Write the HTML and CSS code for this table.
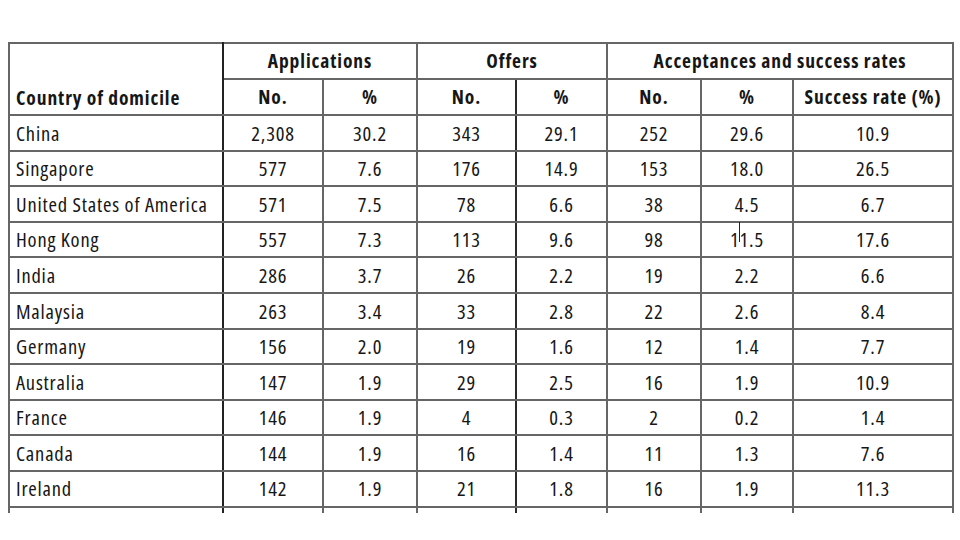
FILE: index.html
```html
<!DOCTYPE html>
<html>
<head>
<meta charset="utf-8">
<link rel="stylesheet" href="styles.css">
</head>
<body>
<div class="page">
<table class="data">
  <colgroup>
    <col class="c-country"><col class="c1"><col class="c2"><col class="c3"><col class="c4"><col class="c5"><col class="c6"><col class="c7">
  </colgroup>
  <thead>
    <tr class="h1">
      <th class="country-h" rowspan="2">Country of domicile</th>
      <th colspan="2">Applications</th>
      <th colspan="2">Offers</th>
      <th colspan="3">Acceptances and success rates</th>
    </tr>
    <tr class="h2">
      <th>No.</th><th>%</th><th class="dark-r">No.</th><th>%</th><th>No.</th><th>%</th><th>Success rate (%)</th>
    </tr>
  </thead>
  <tbody>
    <tr><td>China</td><td>2,308</td><td>30.2</td><td class="dark-r">343</td><td>29.1</td><td>252</td><td>29.6</td><td>10.9</td></tr>
    <tr><td>Singapore</td><td>577</td><td>7.6</td><td class="dark-r">176</td><td>14.9</td><td>153</td><td>18.0</td><td>26.5</td></tr>
    <tr><td>United States of America</td><td>571</td><td>7.5</td><td class="dark-r">78</td><td>6.6</td><td>38</td><td>4.5</td><td>6.7</td></tr>
    <tr><td>Hong Kong</td><td>557</td><td>7.3</td><td class="dark-r">113</td><td>9.6</td><td>98</td><td>1<span class="glitch">1</span>.5</td><td>17.6</td></tr>
    <tr><td>India</td><td>286</td><td>3.7</td><td class="dark-r">26</td><td>2.2</td><td>19</td><td>2.2</td><td>6.6</td></tr>
    <tr><td>Malaysia</td><td>263</td><td>3.4</td><td class="dark-r">33</td><td>2.8</td><td>22</td><td>2.6</td><td>8.4</td></tr>
    <tr><td>Germany</td><td>156</td><td>2.0</td><td class="dark-r">19</td><td>1.6</td><td>12</td><td>1.4</td><td>7.7</td></tr>
    <tr><td>Australia</td><td>147</td><td>1.9</td><td class="dark-r">29</td><td>2.5</td><td>16</td><td>1.9</td><td>10.9</td></tr>
    <tr><td>France</td><td>146</td><td>1.9</td><td class="dark-r">4</td><td>0.3</td><td>2</td><td>0.2</td><td>1.4</td></tr>
    <tr><td>Canada</td><td>144</td><td>1.9</td><td class="dark-r">16</td><td>1.4</td><td>11</td><td>1.3</td><td>7.6</td></tr>
    <tr><td>Ireland</td><td>142</td><td>1.9</td><td class="dark-r">21</td><td>1.8</td><td>16</td><td>1.9</td><td>11.3</td></tr>
    <tr class="cut"><td></td><td></td><td></td><td class="dark-r"></td><td></td><td></td><td></td><td></td></tr>
  </tbody>
</table>
</div>
</body>
</html>
```

FILE: styles.css
```css
html, body {
  margin: 0;
  padding: 0;
  background: #fff;
}
.page {
  width: 960px;
  height: 540px;
  overflow: hidden;
  padding: 42px 0 0 8px;
  box-sizing: border-box;
}
.data {
  border-collapse: collapse;
  table-layout: fixed;
  width: 944px;
  font-family: "Open Sans", "Noto Sans", sans-serif;
  font-stretch: 75%;
  font-size: 20.5px;
  letter-spacing: 0.8px;
  color: #161616;
}
.c-country { width: 214px; }
.c1 { width: 100px; }
.c2 { width: 94px; }
.c3 { width: 99px; }
.c4 { width: 91px; }
.c5 { width: 94px; }
.c6 { width: 92px; }
.c7 { width: 160px; }

.data th, .data td {
  border: 2px solid #666;
  padding: 0;
  text-align: center;
  line-height: 1;
  white-space: nowrap;
}
.data th {
  font-weight: 700;
  font-size: 19.5px;
  letter-spacing: 0.9px;
}
.data td:first-child {
  text-align: left;
  padding-left: 6px;
  border-right-color: #222;
}
.data th.country-h {
  text-align: left;
  padding-left: 6px;
  vertical-align: bottom;
  padding-bottom: 7px;
  border-right-color: #222;
}
.data .dark-r { border-right-color: #2a2a2a; }
.h1 { height: 36px; }
.h2 { height: 36px; }
.data tbody tr { height: 35.6px; }
.data tbody tr.cut { height: 6px; }
.data tbody tr.cut td { border-bottom: none; }
.glitch {
  position: relative;
}
.glitch::before {
  content: "";
  position: absolute;
  left: -1px;
  top: -3px;
  height: 20px;
  border-left: 1.5px solid #222;
}
```
